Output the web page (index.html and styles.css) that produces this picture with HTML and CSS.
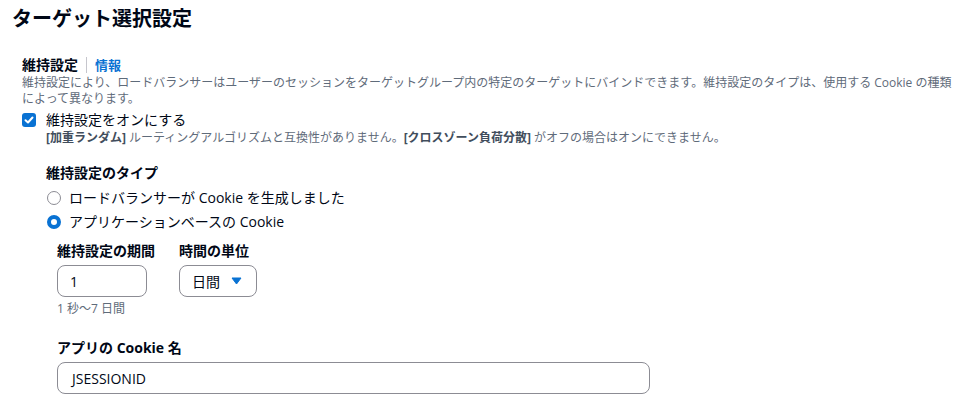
FILE: index.html
```html
<!DOCTYPE html>
<html lang="ja">
<head>
<meta charset="utf-8">
<link rel="stylesheet" href="styles.css">
</head>
<body>
<div class="page">
  <h2 class="title">ターゲット選択設定</h2>
  <div class="section">
    <div class="label-row">
      <span class="label">維持設定</span>
      <span class="divider"></span>
      <a class="info">情報</a>
    </div>
    <p class="desc">維持設定により、ロードバランサーはユーザーのセッションをターゲットグループ内の特定のターゲットにバインドできます。維持設定のタイプは、使用する Cookie の種類によって異なります。</p>
    <div class="check-row">
      <span class="checkbox">
        <svg width="10" height="10" viewBox="0 0 10 10"><path d="M1.5 5.2 L4 7.5 L8.5 2.5" fill="none" stroke="#fff" stroke-width="2" stroke-linecap="round" stroke-linejoin="round"/></svg>
      </span>
      <div class="check-text">
        <div class="check-label">維持設定をオンにする</div>
        <div class="check-desc"><b>[加重ランダム]</b> ルーティングアルゴリズムと互換性がありません。<b>[クロスゾーン負荷分散]</b> がオフの場合はオンにできません。</div>
      </div>
    </div>
    <div class="nested">
      <div class="sub-label">維持設定のタイプ</div>
      <div class="radio-row first"><span class="radio"></span><span>ロードバランサーが Cookie を生成しました</span></div>
      <div class="radio-row"><span class="radio on"></span><span>アプリケーションベースの Cookie</span></div>
      <div class="inner">
        <div class="fields">
          <div class="field">
            <div class="sub-label">維持設定の期間</div>
            <div class="input small">1</div>
            <div class="hint">1 秒〜7 日間</div>
          </div>
          <div class="field">
            <div class="sub-label">時間の単位</div>
            <div class="select">日間 <svg width="11" height="8" viewBox="0 0 11 8"><path d="M1 1 H10 L5.5 7 Z" fill="#0972d3" stroke="#0972d3" stroke-width="1" stroke-linejoin="round"/></svg></div>
          </div>
        </div>
        <div class="sub-label cookie-label">アプリの Cookie 名</div>
        <div class="input wide">JSESSIONID</div>
      </div>
    </div>
  </div>
</div>
</body>
</html>
```
FILE: styles.css
```css
* { box-sizing: border-box; }
body {
  margin: 0;
  font-family: "Open Sans", "Noto Sans CJK JP", sans-serif;
  color: #000716;
  background: #fff;
}
.page { padding: 5px 12px 0 12px; }
.title {
  margin: 0;
  font-size: 20px;
  line-height: 28px;
  font-weight: 700;
}
.section { padding: 22px 0 0 10px; }
.label-row {
  display: flex;
  align-items: center;
  gap: 8px;
  height: 20px;
}
.label { font-size: 14px; font-weight: 700; line-height: 20px; }
.divider { width: 1px; height: 16px; background: #c6c6cd; }
.info { font-size: 13px; font-weight: 700; color: #0972d3; line-height: 20px; }
.desc {
  margin: 0;
  font-size: 12px;
  line-height: 16px;
  color: #5f6b7a;
  max-width: 940px;
}
.check-row { display: flex; gap: 10px; margin-top: 3px; }
.checkbox {
  width: 14px; height: 14px; margin-top: 3px;
  border-radius: 3px; background: #0972d3;
  display: flex; align-items: center; justify-content: center;
  flex: none;
}
.check-label { font-size: 14px; line-height: 20px; }
.check-desc { font-size: 12px; line-height: 16px; color: #5f6b7a; }
.check-desc b { color: #414d5c; font-weight: 700; }
.nested { padding: 17px 0 0 24px; }
.sub-label { font-size: 14px; font-weight: 700; line-height: 20px; }
.radio-row {
  display: flex; align-items: center; gap: 8px;
  font-size: 14px; line-height: 20px; margin-top: 4px;
}
.radio-row.first { margin-top: 5px; }
.radio {
  width: 14px; height: 14px; border-radius: 50%;
  border: 1.5px solid #8c8c94; flex: none; margin-left: 1px;
}
.radio.on { border: 4px solid #0972d3; }
.inner { padding: 9px 0 0 11px; }
.fields { display: flex; gap: 24px; }
.field { display: flex; flex-direction: column; }
.input, .select {
  height: 32px;
  border: 1px solid #8c8c94;
  border-radius: 8px;
  font-size: 14px;
  display: flex; align-items: center;
  padding: 0 12px;
  margin-top: 4px;
}
.input.small { width: 90px; }
.select { width: 78px; gap: 11px; }
.hint { font-size: 12px; line-height: 16px; color: #5f6b7a; margin-top: 4px; }
.cookie-label { margin-top: 21px; }
.input.wide { width: 593px; padding-left: 14px; }
```
